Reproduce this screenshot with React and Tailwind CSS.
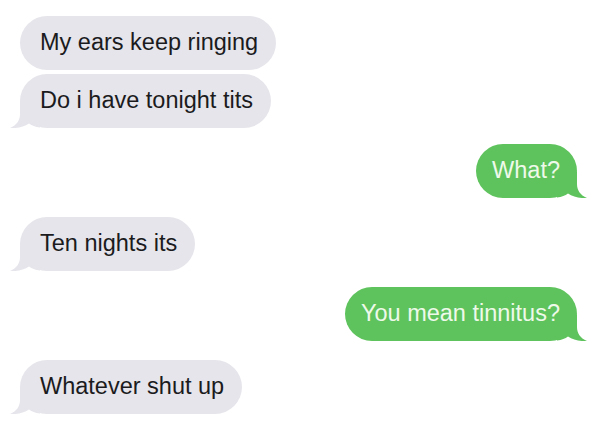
import React from 'react';

const font = { fontFamily: '"Liberation Sans", Arial, sans-serif' };

function Tail({ side, color }) {
  const left = side === 'left';
  return (
    <svg
      width="30"
      height="26"
      viewBox="0 0 30 26"
      className={`absolute bottom-0 ${left ? '-left-[10px]' : '-right-[10px] -scale-x-100'}`}
      fill={color}
    >
      <path d="M10 0 L10 12 C10 18 7 23 0 26 C7 26.5 14 25 19 21.5 C22 23.5 25 25 30 25.6 L30 0 Z" />
    </svg>
  );
}

function Bubble({ text, sent, tail, className = '' }) {
  return (
    <div className={`relative ${sent ? 'self-end' : 'self-start'} ${className}`}>
      {tail && <Tail side={sent ? 'right' : 'left'} color={sent ? '#5ec35c' : '#e6e5eb'} />}
      <div
        className={`relative h-[54px] rounded-[27px] flex items-center text-[23.5px] leading-none ${
          sent ? 'bg-[#5ec35c] text-[#eef9ea] pl-[16px] pr-[17px]' : 'bg-[#e6e5eb] text-[#1b1b1d] pl-[20px] pr-[18px]'
        }`}
      >
        {text}
      </div>
    </div>
  );
}

export default function App() {
  return (
    <div className="w-[599px] h-[446px] bg-white overflow-hidden flex flex-col pl-[20px] pr-[22px] pt-[16px]" style={font}>
      <Bubble text="My ears keep ringing" />
      <Bubble text="Do i have tonight tits" tail className="mt-[4px]" />
      <Bubble text="What?" sent tail className="mt-[16px]" />
      <Bubble text="Ten nights its" tail className="mt-[19px]" />
      <Bubble text="You mean tinnitus?" sent tail className="mt-[16px]" />
      <Bubble text="Whatever shut up" tail className="mt-[19px]" />
    </div>
  );
}
